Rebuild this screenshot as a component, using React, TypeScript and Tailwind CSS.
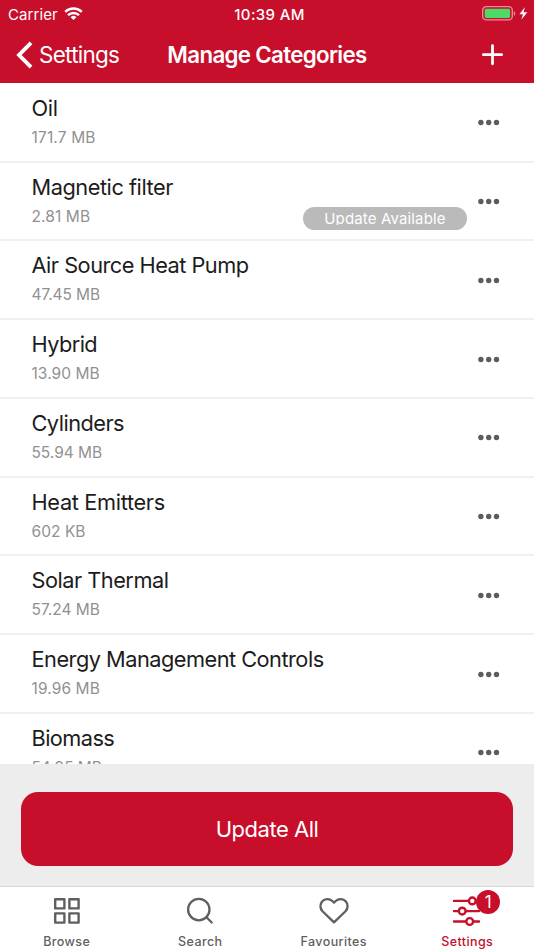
type Category = { name: string; size: string; update?: boolean; tracking: string; sizeTracking: string };

const categories: Category[] = [
  { name: "Oil", size: "171.7 MB", tracking: "tracking-[-0.3px]", sizeTracking: "tracking-[0.15px]" },
  { name: "Magnetic filter", size: "2.81 MB", update: true, tracking: "tracking-[-0.46px]", sizeTracking: "tracking-[0.1px]" },
  { name: "Air Source Heat Pump", size: "47.45 MB", tracking: "tracking-[-0.51px]", sizeTracking: "tracking-[-0.1px]" },
  { name: "Hybrid", size: "13.90 MB", tracking: "tracking-[-0.57px]", sizeTracking: "tracking-[0.05px]" },
  { name: "Cylinders", size: "55.94 MB", tracking: "tracking-[-0.53px]", sizeTracking: "tracking-[-0.05px]" },
  { name: "Heat Emitters", size: "602 KB", tracking: "tracking-[-0.34px]", sizeTracking: "tracking-[0.05px]" },
  { name: "Solar Thermal", size: "57.24 MB", tracking: "tracking-[-0.5px]", sizeTracking: "tracking-[0px]" },
  { name: "Energy Management Controls", size: "19.96 MB", tracking: "tracking-[-0.51px]", sizeTracking: "tracking-[0.1px]" },
  { name: "Biomass", size: "54.95 MB", tracking: "tracking-[-0.58px]", sizeTracking: "tracking-[-0.05px]" },
];

function StatusBar() {
  return (
    <div className="grid h-7 grid-cols-3 items-center text-[15px] leading-none">
      <div className="flex items-center gap-[6px] pl-2">
        <span className="tracking-[0.1px]">Carrier</span>
        <svg width="19" height="14" viewBox="0 0 19 14" fill="none" stroke="white" strokeWidth="2.4">
          <path d="M1.2 4.9a11.8 11.8 0 0 1 16.6 0" />
          <path d="M4 8.2a7.8 7.8 0 0 1 11 0" />
          <path d="M9.5 13.1 6.6 10.3a4.1 4.1 0 0 1 5.8 0Z" fill="white" stroke="none" />
        </svg>
      </div>
      <span className="pl-[5px] text-center font-medium tracking-[0.35px]">10:39 AM</span>
      <div className="flex items-center justify-end pr-[6px]">
        <svg width="46" height="16" viewBox="0 0 46 16">
          <rect x="0.7" y="0.7" width="29.6" height="13.2" rx="3.6" fill="none" stroke="#e78f9c" strokeWidth="1.3" />
          <rect x="2.7" y="2.7" width="25.4" height="9.2" rx="1.4" fill="#4cd964" />
          <path d="M31.8 4.9c2 .7 2 4.1 0 4.8Z" fill="#e78f9c" />
          <path d="M43 1.1 37.4 8.2h3.5l-1.6 5.6L45.3 6.2h-3.8Z" fill="white" />
        </svg>
      </div>
    </div>
  );
}

function Header() {
  return (
    <header className="h-[83px] shrink-0 bg-[#c70e2b] text-white">
      <StatusBar />
      <div className="grid h-[54px] grid-cols-[150px_1fr_150px] items-center">
        <div className="flex items-center gap-[6px] pl-4">
          <svg width="17" height="28" viewBox="0 0 17 28" fill="none" stroke="white" strokeWidth="3.9">
            <path d="M15 1.8 3 14l12 12.2" />
          </svg>
          <span className="text-[22.5px] leading-7 tracking-[-0.74px]">Settings</span>
        </div>
        <h1 className="text-center text-[22.3px] leading-7 font-semibold tracking-[-0.66px] whitespace-nowrap">
          Manage Categories
        </h1>
        <div className="flex justify-end pr-[30px]">
          <svg width="22" height="22" viewBox="0 0 22 22" fill="none" stroke="white" strokeWidth="2.8" strokeLinecap="round">
            <path d="M10.5 1.6v18.2M1.4 10.7h18.2" />
          </svg>
        </div>
      </div>
    </header>
  );
}

function Row({ item }: { item: Category }) {
  return (
    <li className="flex h-[78.75px] shrink-0 border-b-2 border-[#f0f0f0] bg-white pr-[34px] pl-[31.5px]">
      <div className="flex-1">
        <p className={`mt-[10px] text-[21.75px] leading-7 whitespace-nowrap text-[#1c1c1c] ${item.tracking}`}>{item.name}</p>
        <p className={`mt-[6px] text-[15.5px] leading-5 text-[#919191] ${item.sizeTracking}`}>{item.size}</p>
      </div>
      {item.update && (
        <span className="mt-[44px] mr-[11px] flex h-[23px] w-[164px] justify-center rounded-full bg-[#bababa] pt-[4px] text-[15px] text-white">
          <span className="h-[14px] overflow-hidden leading-4 tracking-[0.15px]">Update Available</span>
        </span>
      )}
      <svg className="mt-[35.5px]" width="22" height="7" viewBox="0 0 22 7" fill="#5c5c5c">
        <circle cx="2.9" cy="3.5" r="2.7" />
        <circle cx="10.7" cy="3.5" r="2.7" />
        <circle cx="18.5" cy="3.5" r="2.7" />
      </svg>
    </li>
  );
}

function TabBar() {
  return (
    <nav className="grid h-[64px] shrink-0 grid-cols-4 border-t-[1.5px] border-[#d8d8d8] bg-white text-[12.5px] leading-4 font-medium tracking-[0.4px] text-[#5f5f5f]">
      <div className="flex flex-col items-center pt-2">
        <svg width="32" height="32" viewBox="0 0 32 32" fill="none" stroke="#5f5f5f" strokeWidth="2.4" strokeLinejoin="round">
          <rect x="4.2" y="4.2" width="9.2" height="9.2" />
          <rect x="18.4" y="4.2" width="9.2" height="9.2" />
          <rect x="4.2" y="18.4" width="9.2" height="9.2" />
          <rect x="18.4" y="18.4" width="9.2" height="9.2" />
        </svg>
        <span className="mt-[7px]">Browse</span>
      </div>
      <div className="flex flex-col items-center pt-2">
        <svg width="32" height="32" viewBox="0 0 32 32" fill="none" stroke="#5f5f5f" strokeWidth="2.3" strokeLinecap="round">
          <circle cx="14.8" cy="14.6" r="10.7" />
          <path d="m22.5 22.3 5.2 5.2" />
        </svg>
        <span className="mt-[7px]">Search</span>
      </div>
      <div className="flex flex-col items-center pt-2">
        <svg width="32" height="32" viewBox="0 0 32 32" fill="none" stroke="#5f5f5f" strokeWidth="2.3" strokeLinejoin="round">
          <path d="M16 27.4 4.5 16.2C1.9 13.5 1.7 9.3 4.1 6.5 6.8 3.4 11.5 3.3 14.3 6L16 7.6 17.7 6c2.8-2.7 7.5-2.6 10.2.5 2.4 2.8 2.2 7-.4 9.7Z" />
        </svg>
        <span className="mt-[7px]">Favourites</span>
      </div>
      <div className="flex flex-col items-center pt-2 text-[#c70e2b]">
        <div className="relative h-8 w-8">
          <svg width="32" height="32" viewBox="0 0 32 32" fill="white" stroke="#c70e2b" strokeWidth="2.4" strokeLinecap="round">
            <path d="M3 5.9h25M3 16.1h25M3 26.5h25" />
            <circle cx="21.3" cy="5.9" r="3.4" />
            <circle cx="11.2" cy="16.1" r="3.4" />
            <circle cx="18.7" cy="26.5" r="3.4" />
          </svg>
          <span className="absolute top-[-5px] left-[25px] flex h-[24px] w-[24px] items-center justify-center rounded-full bg-[#c70e2b] text-[17px] font-normal tracking-normal text-white">
            1
          </span>
        </div>
        <span className="mt-[7px]">Settings</span>
      </div>
    </nav>
  );
}

export default function App() {
  return (
    <div className="flex h-[950px] w-[534px] flex-col overflow-hidden bg-white font-[Inter,'Liberation_Sans',sans-serif]">
      <Header />
      <ul className="flex h-[681px] shrink-0 flex-col overflow-hidden pt-[0.9px]">
        {categories.map((item) => (
          <Row key={item.name} item={item} />
        ))}
      </ul>
      <div className="h-[122px] shrink-0 bg-[#ededed] px-[21px] pt-[28px]">
        <button className="h-[74px] w-full rounded-[17px] bg-[#c70e2b] text-[22px] tracking-[-0.48px] text-white">
          Update All
        </button>
      </div>
      <TabBar />
    </div>
  );
}
